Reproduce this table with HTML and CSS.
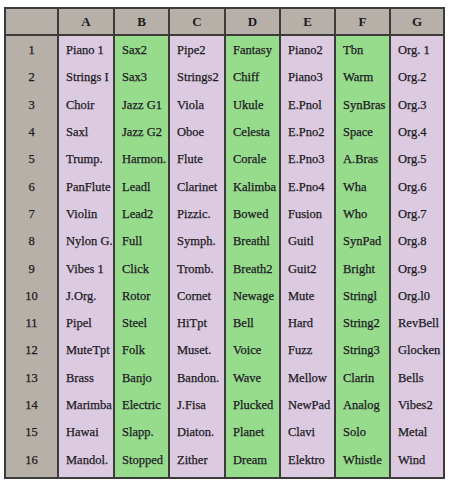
FILE: index.html
```html
<!DOCTYPE html>
<html>
<head>
<meta charset="utf-8">
<link rel="stylesheet" href="styles.css">
</head>
<body>
<div class="sheet">
  <div class="head">
    <div class="hc c0"></div>
    <div class="hc c1">A</div>
    <div class="hc c2">B</div>
    <div class="hc c3">C</div>
    <div class="hc c4">D</div>
    <div class="hc c5">E</div>
    <div class="hc c6">F</div>
    <div class="hc c7">G</div>
  </div>
  <div class="body">
    <div class="col c0 gray num">
      <div>1</div><div>2</div><div>3</div><div>4</div><div>5</div><div>6</div><div>7</div><div>8</div>
      <div>9</div><div>10</div><div>11</div><div>12</div><div>13</div><div>14</div><div>15</div><div>16</div>
    </div>
    <div class="col c1 pink">
      <div>Piano 1</div><div>Strings I</div><div>Choir</div><div>Saxl</div><div>Trump.</div><div>PanFlute</div><div>Violin</div><div>Nylon G.</div>
      <div>Vibes 1</div><div>J.Org.</div><div>Pipel</div><div>MuteTpt</div><div>Brass</div><div>Marimba</div><div>Hawai</div><div>Mandol.</div>
    </div>
    <div class="col c2 green">
      <div>Sax2</div><div>Sax3</div><div>Jazz G1</div><div>Jazz G2</div><div>Harmon.</div><div>Leadl</div><div>Lead2</div><div>Full</div>
      <div>Click</div><div>Rotor</div><div>Steel</div><div>Folk</div><div>Banjo</div><div>Electric</div><div>Slapp.</div><div>Stopped</div>
    </div>
    <div class="col c3 pink">
      <div>Pipe2</div><div>Strings2</div><div>Viola</div><div>Oboe</div><div>Flute</div><div>Clarinet</div><div>Pizzic.</div><div>Symph.</div>
      <div>Tromb.</div><div>Cornet</div><div>HiTpt</div><div>Muset.</div><div>Bandon.</div><div>J.Fisa</div><div>Diaton.</div><div>Zither</div>
    </div>
    <div class="col c4 green">
      <div>Fantasy</div><div>Chiff</div><div>Ukule</div><div>Celesta</div><div>Corale</div><div>Kalimba</div><div>Bowed</div><div>Breathl</div>
      <div>Breath2</div><div>Newage</div><div>Bell</div><div>Voice</div><div>Wave</div><div>Plucked</div><div>Planet</div><div>Dream</div>
    </div>
    <div class="col c5 pink">
      <div>Piano2</div><div>Piano3</div><div>E.Pnol</div><div>E.Pno2</div><div>E.Pno3</div><div>E.Pno4</div><div>Fusion</div><div>Guitl</div>
      <div>Guit2</div><div>Mute</div><div>Hard</div><div>Fuzz</div><div>Mellow</div><div>NewPad</div><div>Clavi</div><div>Elektro</div>
    </div>
    <div class="col c6 green">
      <div>Tbn</div><div>Warm</div><div>SynBras</div><div>Space</div><div>A.Bras</div><div>Wha</div><div>Who</div><div>SynPad</div>
      <div>Bright</div><div>Stringl</div><div>String2</div><div>String3</div><div>Clarin</div><div>Analog</div><div>Solo</div><div>Whistle</div>
    </div>
    <div class="col c7 pink">
      <div>Org. 1</div><div>Org.2</div><div>Org.3</div><div>Org.4</div><div>Org.5</div><div>Org.6</div><div>Org.7</div><div>Org.8</div>
      <div>Org.9</div><div>Org.l0</div><div>RevBell</div><div>Glocken</div><div>Bells</div><div>Vibes2</div><div>Metal</div><div>Wind</div>
    </div>
  </div>
</div>
</body>
</html>
```
FILE: styles.css
```css
html, body {
  margin: 0;
  padding: 0;
  background: #ffffff;
}
body {
  width: 450px;
  height: 483px;
  overflow: hidden;
  font-family: "Liberation Serif", "Times New Roman", serif;
  color: #1d1a24;
}
.sheet {
  margin: 7px 0 0 4px;
  width: 441px;
  box-sizing: border-box;
  border: 2px solid #3c3a3a;
}
.head {
  display: flex;
  height: 25px;
  background: #b6b0a8;
  border-bottom: 2px solid #3c3a3a;
}
.hc {
  display: flex;
  align-items: center;
  justify-content: center;
  font-weight: bold;
  font-size: 13px;
  box-sizing: border-box;
  border-right: 2px solid #3c3a3a;
  padding-top: 1px;
}
.hc.c7, .col.c7 { border-right: none; }
.c0 { width: 53px; }
.c1 { width: 56px; }
.c2 { width: 55px; }
.c3 { width: 56px; }
.c4 { width: 55px; }
.c5 { width: 55px; }
.c6 { width: 55px; }
.c7 { width: 52px; }
.body {
  display: flex;
  height: 441px;
}
.col {
  display: flex;
  flex-direction: column;
  box-sizing: border-box;
  border-right: 2px solid #3c3a3a;
  padding: 1px 0 3px 7px;
  font-size: 12.5px;
  -webkit-text-stroke: 0.25px #1d1a24;
}
.col > div {
  height: 27.3px;
  display: flex;
  align-items: center;
  white-space: nowrap;
}
.col.num {
  padding-left: 0;
}
.col.num > div {
  justify-content: center;
}
.gray { background: #b6b0a8; }
.pink { background: #dccae0; }
.green { background: #97dc8c; }
```
